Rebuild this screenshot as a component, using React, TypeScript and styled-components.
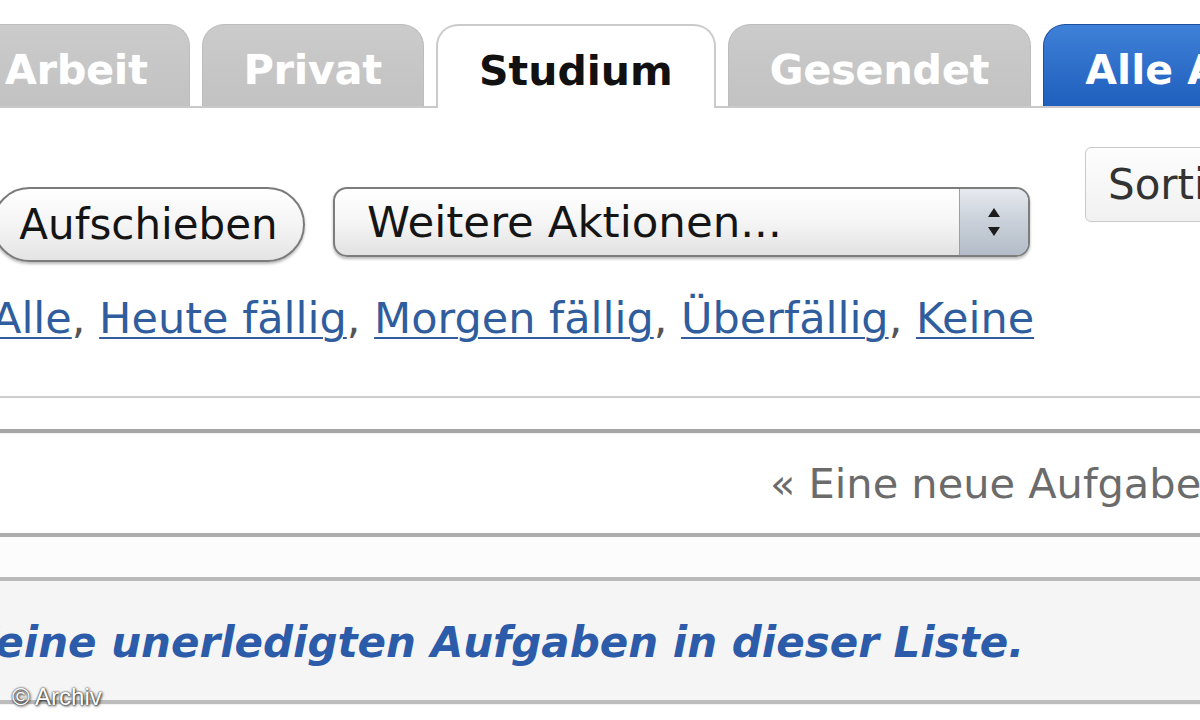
import React from 'react';
import styled, { createGlobalStyle, css } from 'styled-components';

const GlobalStyle = createGlobalStyle`
  html, body {
    margin: 0;
    padding: 0;
    background: #fff;
    overflow: hidden;
  }
  body {
    font-family: 'DejaVu Sans', Verdana, sans-serif;
  }
`;

const Viewport = styled.div`
  position: relative;
  width: 1200px;
  height: 720px;
  overflow: hidden;
`;

const Page = styled.div`
  width: 1640px;
  margin-left: -40px;
`;

/* tabs */

const TabBar = styled.div`
  display: flex;
  align-items: flex-end;
  gap: 12px;
  height: 82px;
  padding: 24px 0 0 3px;
  border-bottom: 2px solid #c9c9c9;
`;

type TabKind = 'idle' | 'active' | 'blue';

const Tab = styled.div<{ $kind: TabKind }>`
  box-sizing: border-box;
  display: flex;
  align-items: center;
  height: 82px;
  padding: 8px 41px 0;
  border-radius: 22px 22px 0 0;
  font-size: 41px;
  font-weight: bold;
  white-space: nowrap;

  ${({ $kind }) =>
    $kind === 'idle' &&
    css`
      background: linear-gradient(#cbcbcb, #c2c2c2);
      border: 1px solid #bdbdbd;
      border-bottom: none;
      color: #fff;
      text-shadow: 0 0 1px rgba(255, 255, 255, 0.6);
    `}

  ${({ $kind }) =>
    $kind === 'active' &&
    css`
      height: 84px;
      margin-bottom: -2px;
      background: #fff;
      border: 2px solid #cbcbcb;
      border-bottom: none;
      color: #111;
    `}

  ${({ $kind }) =>
    $kind === 'blue' &&
    css`
      background: linear-gradient(#3f80d8, #1f5fbd);
      border: 1px solid #1b509f;
      border-bottom: none;
      color: #fff;
    `}
`;

/* toolbar */

const Toolbar = styled.div`
  display: grid;
  grid-template-columns: 1090px auto;
  height: 288px;
  padding-left: 35px;
`;

const ActionColumn = styled.div`
  padding-top: 79px;
`;

const ActionRow = styled.div`
  display: flex;
  align-items: flex-start;
  gap: 28px;
`;

const PillButton = styled.div`
  box-sizing: border-box;
  display: flex;
  align-items: center;
  justify-content: center;
  width: 313px;
  height: 75px;
  margin-left: -3px;
  border: 2px solid #7b7b7b;
  border-radius: 38px;
  background: linear-gradient(#ffffff, #f3f3f3 55%, #e4e4e4);
  box-shadow: 0 2px 3px rgba(0, 0, 0, 0.28);
  font-size: 42px;
  color: #141414;
`;

const SelectBox = styled.div`
  box-sizing: border-box;
  display: flex;
  width: 697px;
  height: 70px;
  border: 2px solid #7d7d7d;
  border-radius: 14px;
  overflow: hidden;
  background: linear-gradient(#ffffff, #f5f5f5 50%, #e2e2e2);
  box-shadow: 0 2px 3px rgba(0, 0, 0, 0.28);
`;

const SelectLabel = styled.div`
  flex: 1;
  display: flex;
  align-items: center;
  padding-left: 32px;
  font-size: 43.5px;
  color: #151515;
  white-space: nowrap;
`;

const SelectArrows = styled.div`
  display: flex;
  align-items: center;
  justify-content: center;
  width: 68px;
  border-left: 1px solid #9aa0a8;
  background: linear-gradient(#e6eaef, #c9d0d9 50%, #b3bcc8);
`;

const FilterLinks = styled.div`
  margin-top: 31px;
  margin-left: -3px;
  font-size: 43px;
  line-height: 50px;
  color: #555;
  white-space: nowrap;
`;

const FilterLink = styled.a`
  color: #2f5d9d;
  text-decoration: underline;
  text-decoration-thickness: 2px;
  text-underline-offset: 4px;
`;

const SortColumn = styled.div`
  padding-top: 39px;
`;

const SortButton = styled.div`
  box-sizing: border-box;
  display: inline-flex;
  align-items: center;
  height: 75px;
  padding: 0 22px;
  border: 1px solid #c9c9c9;
  border-radius: 6px;
  background: linear-gradient(#fdfdfd, #f1f1f1);
  font-size: 42px;
  color: #333;
  white-space: nowrap;
`;

/* list area */

const Divider = styled.div<{ $tone: string; $size: number }>`
  height: ${({ $size }) => $size}px;
  background: ${({ $tone }) => $tone};
  box-shadow: 0 1px 1px rgba(0, 0, 0, 0.06);
`;

const Spacer = styled.div<{ $height: number; $bg?: string }>`
  height: ${({ $height }) => $height}px;
  background: ${({ $bg }) => $bg || '#fff'};
`;

const NewTaskRow = styled.div`
  display: flex;
  align-items: center;
  height: 100px;
  padding-left: 810px;
  font-size: 41.5px;
  color: #6b6b6b;
  white-space: nowrap;
`;

const MessageRow = styled.div`
  display: flex;
  align-items: center;
  height: 119px;
  padding: 4px 0 0 5px;
  box-sizing: border-box;
  background: #f5f5f5;
  font-size: 42px;
  font-weight: bold;
  font-style: italic;
  color: #2c5ca9;
  white-space: nowrap;
`;

const Watermark = styled.div`
  position: absolute;
  left: 12px;
  top: 683px;
  font-family: 'Liberation Sans', Arial, sans-serif;
  font-size: 24px;
  color: #fff;
  text-shadow: 0 0 2px #111, 1px 1px 3px #222;
`;

function UpDownArrows() {
  return (
    <svg width="16" height="40" viewBox="0 0 16 40">
      <polygon points="8,6 14,15 2,15" fill="#1c1c1c" />
      <polygon points="2,25 14,25 8,34" fill="#1c1c1c" />
    </svg>
  );
}

const tabs: { label: string; kind: TabKind }[] = [
  { label: 'Arbeit', kind: 'idle' },
  { label: 'Privat', kind: 'idle' },
  { label: 'Studium', kind: 'active' },
  { label: 'Gesendet', kind: 'idle' },
  { label: 'Alle Aufgaben', kind: 'blue' },
];

const filters = ['Alle', 'Heute fällig', 'Morgen fällig', 'Überfällig', 'Keine'];

export default function App() {
  return (
    <Viewport>
      <GlobalStyle />
      <Page>
        <TabBar>
          {tabs.map((tab) => (
            <Tab key={tab.label} $kind={tab.kind}>
              {tab.label}
            </Tab>
          ))}
        </TabBar>

        <Toolbar>
          <ActionColumn>
            <ActionRow>
              <PillButton>Aufschieben</PillButton>
              <SelectBox>
                <SelectLabel>Weitere Aktionen...</SelectLabel>
                <SelectArrows>
                  <UpDownArrows />
                </SelectArrows>
              </SelectBox>
            </ActionRow>
            <FilterLinks>
              {filters.map((f, i) => (
                <React.Fragment key={f}>
                  <FilterLink>{f}</FilterLink>
                  {i < filters.length - 1 && ', '}
                </React.Fragment>
              ))}
            </FilterLinks>
          </ActionColumn>
          <SortColumn>
            <SortButton>Sortieren nach</SortButton>
          </SortColumn>
        </Toolbar>

        <Divider $tone="#cdcdcd" $size={2} />
        <Spacer $height={31} />
        <Divider $tone="#a6a6a6" $size={4} />
        <NewTaskRow>« Eine neue Aufgabe hinzufügen</NewTaskRow>
        <Divider $tone="#adadad" $size={4} />
        <Spacer $height={40} $bg="#fcfcfc" />
        <Divider $tone="#b9b9b9" $size={4} />
        <MessageRow>Keine unerledigten Aufgaben in dieser Liste.</MessageRow>
        <Divider $tone="#bcbcbc" $size={4} />
      </Page>
      <Watermark>© Archiv</Watermark>
    </Viewport>
  );
}
